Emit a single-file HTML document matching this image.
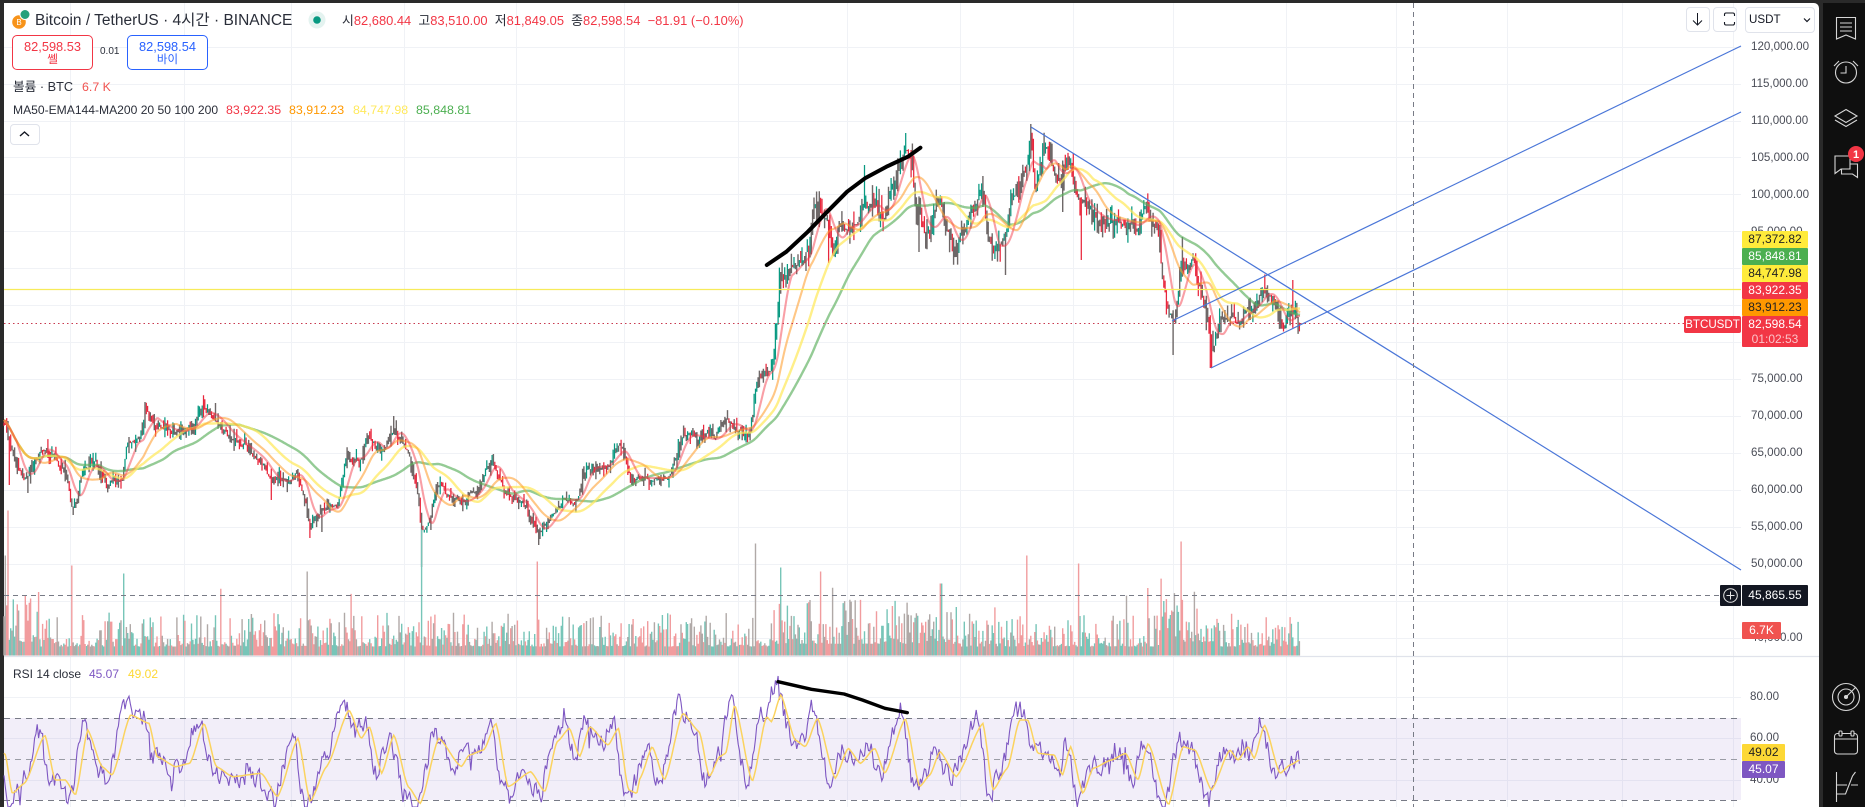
<!DOCTYPE html>
<html lang="ko"><head><meta charset="utf-8"><title>BTCUSDT</title>
<style>
html,body{margin:0;padding:0;width:1865px;height:807px;overflow:hidden;background:#2a2a2a;font-family:"Liberation Sans","Noto Sans CJK KR",sans-serif}
#c{position:absolute;left:4px;top:3px;width:1815px;height:804px;background:#fff;border-top-right-radius:5px}
#s{position:absolute;left:1823px;top:3px;width:42px;height:804px;background:#0f0f0f}
svg{position:absolute;left:0;top:0}
.t{position:absolute;white-space:nowrap;line-height:16px;height:16px}
.ax{position:absolute;left:1751px;font-size:11.6px;color:#4a4d57;line-height:14px;height:14px;white-space:nowrap}
.l{position:absolute;left:1742px;width:66px;height:17px;line-height:17px;text-align:center;font-size:12px;color:#fff;border-radius:1px;white-space:nowrap}
.r{color:#f23645}
.box{position:absolute;top:35px;width:79px;height:33px;border:1px solid #f23645;border-radius:5px;background:#fff;text-align:center;color:#f23645;box-sizing:content-box}
.box div{font-size:12.8px;line-height:13px}
.btn{position:absolute;top:7px;width:22px;height:23px;border:1px solid #e0e3eb;border-radius:4px;background:#fff}
</style></head><body>
<div id="c"></div><div id="s"></div>
<svg id="g" width="1865" height="807" viewBox="0 0 1865 807"></svg>

<div class="ax" style="top:40px">120,000.00</div>
<div class="ax" style="top:77px">115,000.00</div>
<div class="ax" style="top:114px">110,000.00</div>
<div class="ax" style="top:151px">105,000.00</div>
<div class="ax" style="top:188px">100,000.00</div>
<div class="ax" style="top:225px">95,000.00</div>
<div class="ax" style="top:372px">75,000.00</div>
<div class="ax" style="top:409px">70,000.00</div>
<div class="ax" style="top:446px">65,000.00</div>
<div class="ax" style="top:483px">60,000.00</div>
<div class="ax" style="top:520px">55,000.00</div>
<div class="ax" style="top:557px">50,000.00</div>
<div class="ax" style="top:631px">40,000.00</div>
<div class="ax" style="top:690px;left:1750px">80.00</div>
<div class="ax" style="top:731px;left:1750px">60.00</div>
<div class="ax" style="top:773px;left:1750px">40.00</div>

<div class="l" style="top:231px;background:#ffeb3b;color:#222">87,372.82</div>
<div class="l" style="top:248px;background:#4caf50">85,848.81</div>
<div class="l" style="top:265px;background:#ffeb3b;color:#222">84,747.98</div>
<div class="l" style="top:282px;background:#f23645">83,922.35</div>
<div class="l" style="top:299px;background:#ff9800;color:#222">83,912.23</div>
<div class="l" style="top:316px;background:#f23645;height:31px;line-height:15px;padding-top:1px;box-sizing:border-box">82,598.54<br><span style="color:#fbc4c9">01:02:53</span></div>
<div class="l" style="left:1684px;width:57px;top:316px;background:#f23645;font-size:11.6px;border-radius:2px">BTCUSDT</div>
<div class="l" style="top:585px;height:21px;line-height:21px;background:#131722">45,865.55</div>
<div class="l" style="left:1720px;width:21px;top:585px;height:21px;background:#131722"></div>
<div class="l" style="top:622px;width:39px;background:#f05350">6.7K</div>
<div class="l" style="top:744px;width:43px;background:#fdd835;color:#222">49.02</div>
<div class="l" style="top:761px;width:43px;background:#7e57c2">45.07</div>

<div class="t" style="left:35px;top:13px;font-size:15.5px;color:#2a2e39">Bitcoin / TetherUS · 4시간 · BINANCE</div>
<div class="t" style="left:342px;top:13px;font-size:12.9px;color:#2a2e39">시<span class="r">82,680.44</span>&nbsp; 고<span class="r">83,510.00</span>&nbsp; 저<span class="r">81,849.05</span>&nbsp; 종<span class="r">82,598.54</span>&nbsp; <span class="r">−81.91 (−0.10%)</span></div>

<div class="box" style="left:12px"><div style="margin-top:4px">82,598.53</div><div style="font-size:11.5px;margin-top:1px">쎌</div></div>
<div class="t" style="left:100px;top:44px;font-size:10px;color:#2a2e39">0.01</div>
<div class="box" style="left:127px;border-color:#2962ff;color:#2962ff"><div style="margin-top:4px">82,598.54</div><div style="font-size:11.5px;margin-top:1px">바이</div></div>

<div class="t" style="left:13px;top:79px;font-size:12.7px;color:#2a2e39">볼륨 · BTC</div>
<div class="t" style="left:82px;top:79px;font-size:12.4px;color:#f05350">6.7 K</div>
<div class="t" style="left:13px;top:102px;font-size:12.1px;color:#2a2e39">MA50-EMA144-MA200 20 50 100 200</div>
<div class="t" style="left:226px;top:102px;font-size:12.4px;color:#f23645">83,922.35</div>
<div class="t" style="left:289px;top:102px;font-size:12.4px;color:#ff9800">83,912.23</div>
<div class="t" style="left:353px;top:102px;font-size:12.4px;color:#ffe95c">84,747.98</div>
<div class="t" style="left:416px;top:102px;font-size:12.4px;color:#4caf50">85,848.81</div>
<div class="btn" style="left:10px;top:124px;width:28px;height:19px"></div>
<div class="t" style="left:13px;top:666px;font-size:12px;color:#2a2e39">RSI 14 close</div>
<div class="t" style="left:89px;top:666px;font-size:12px;color:#7e57c2">45.07</div>
<div class="t" style="left:128px;top:666px;font-size:12px;color:#fdd835">49.02</div>

<div class="btn" style="left:1686px"></div><div class="btn" style="left:1713px"></div>
<div class="btn" style="left:1745px;width:68px;height:24px"></div>
<div class="t" style="left:1749px;top:12px;font-size:11.6px;color:#131722">USDT</div>

<svg width="1865" height="807" viewBox="0 0 1865 807">
<!-- coin icon -->
<circle cx="19" cy="22" r="6.8" fill="#f7931a"/><text x="19" y="25" font-size="8" fill="#fff" text-anchor="middle" font-family="Liberation Sans">B</text>
<circle cx="25" cy="14.5" r="5" fill="#26a17b" stroke="#fff" stroke-width="1"/>
<!-- status dot -->
<circle cx="317" cy="20" r="8.5" fill="#e4f3f0"/><circle cx="317" cy="20" r="3.8" fill="#089981"/>
<!-- chevron -->
<path d="M20 136l4.5-4 4.5 4" fill="none" stroke="#131722" stroke-width="1.4"/>
<!-- top buttons -->
<path d="M1697.5 13v12M1693 20.5l4.5 4.5 4.5-4.5" fill="none" stroke="#131722" stroke-width="1"/>
<path d="M1720.5 15v-1.5a1.5 1.5 0 0 1 1.5-1.5h7a1.5 1.5 0 0 1 1.5 1.5v1.5M1720.5 21v1.5a1.5 1.5 0 0 0 1.5 1.5h7a1.5 1.5 0 0 0 1.5-1.5v-1.5" fill="none" stroke="#131722" stroke-width="1.1" transform="translate(4 1)"/>
<path d="M1804 18.5l3 3 3-3" fill="none" stroke="#131722" stroke-width="1.2"/>
<!-- plus button -->
<circle cx="1730.5" cy="595.5" r="6.8" fill="none" stroke="#e6e6e6" stroke-width="1"/><path d="M1730.5 591.5v8M1726.5 595.5h8" stroke="#e6e6e6" stroke-width="1"/>
<!-- sidebar icons -->
<g fill="none" stroke="#d6d6d6" stroke-width="1.1">
<path d="M1836.5 17.5h19v21.5l-9.5-4-9.5 4zM1840 23h12M1840 27h12M1840 31h12"/>
<circle cx="1846" cy="72.5" r="10.5"/><path d="M1846 66v7h-5.5M1834 66l5-5M1858 66l-5-5"/>
<path d="M1846 109.5l11 6.5-11 6.500-11-6.500zM1835 120l11 6.500 11-6.500"/>
<path d="M1835 156h15v13h-9l-6 4.500zM1850 164h7.500v13.500l-5-3.500h-11v-5"/>
<circle cx="1846" cy="697" r="13.500"/><circle cx="1846" cy="697" r="8"/><circle cx="1846" cy="697" r="1.500" fill="#d6d6d6"/><path d="M1846 697l10-10"/>
<rect x="1834.500" y="733.500" width="23" height="20.500" rx="3"/><path d="M1834.500 739h23"/><rect x="1839" y="731" width="3" height="5" rx="1" fill="#0f0f0f"/><rect x="1851" y="731" width="3" height="5" rx="1" fill="#0f0f0f"/>
<path d="M1836.500 772v30M1836.500 785h10.500M1836.500 794h9l7-18 3-4M1851 785h7"/>
</g>
<circle cx="1856" cy="154" r="8" fill="#f23645"/><text x="1856" y="158" font-size="11" font-weight="bold" fill="#fff" text-anchor="middle" font-family="Liberation Sans">1</text>
</svg>

<script>
(function(){
var NS='http://www.w3.org/2000/svg',g=document.getElementById('g');
function add(tag,a,par){var e=document.createElementNS(NS,tag);for(var k in a)e.setAttribute(k,a[k]);(par||g).appendChild(e);return e;}
function line(x1,y1,x2,y2,s,w,d,o){var a={x1:x1,y1:y1,x2:x2,y2:y2,stroke:s,'stroke-width':w||1};if(d)a['stroke-dasharray']=d;if(o)a.opacity=o;add('line',a);}
var seed=12345;function R(){seed|=0;seed=seed+0x6D2B79F5|0;var t=Math.imul(seed^seed>>>15,1|seed);t=t+Math.imul(t^t>>>7,61|t)^t;return((t^t>>>14)>>>0)/4294967296;}
function interp(P,x){if(x<=P[0][0])return P[0][1];for(var i=1;i<P.length;i++){if(x<=P[i][0]){var a=P[i-1],b=P[i],t=(x-a[0])/(b[0]-a[0]);t=t*t*(3-2*t)*.5+t*.5;return a[1]+(b[1]-a[1])*t;}}return P[P.length-1][1];}

// grid
var gc='#f0f2f6',i;
for(i=0;i<=16;i++){var y=Math.round(46.7+i*36.93)+.5;line(4,y,1741,y,gc);}
[697.5,738.5,780.5].forEach(function(y){line(4,y,1741,y,gc);});
[70,184,291,404,516,624,738,847,960,1073,1173,1286,1396,1507,1622,1733].forEach(function(x){line(x+.5,3,x+.5,807,gc);});

// RSI band
add('rect',{x:4,y:718,width:1737,height:82,fill:'#7e57c2','fill-opacity':.1});
[718.5,759.5,800.5].forEach(function(y,i){line(4,y,1741,y,i==1?'#9a9ca5':'#787b86',1,'6 5');});
line(4,656.5,1819,656.5,'#e0e3eb',1.2);

// price center line
var P=[[4,420],[18,467],[24,480],[43,445],[53,458],[65,470],[73,510],[84,467],[96,465],[106,483],[122,477],[127,445],[143,437],[145,412],[155,422],[175,432],[192,427],[202,410],[216,418],[227,433],[245,447],[261,460],[271,478],[286,483],[296,468],[306,503],[310,523],[322,510],[337,507],[347,457],[359,460],[369,437],[382,453],[394,427],[408,453],[416,483],[422,533],[429,523],[437,483],[449,497],[461,503],[475,493],[492,460],[504,490],[522,503],[539,533],[551,517],[565,497],[575,503],[586,468],[608,465],[616,448],[622,450],[631,477],[640,478],[666,478],[684,434],[713,440],[728,422],[749,434],[758,378],[772,367],[777.5,320],[779,277],[786,277],[797,263],[808,253],[815,205],[826,212],[833,250],[840,229],[854,225],[865,207],[877,204],[883,220],[892,189],[906,146],[911,159],[917,213],[929,233],[940,210],[956,247],[972,208],[983,182],[988,237],[993.5,250],[1006,240],[1015,193],[1026,165],[1031,139],[1035,187],[1044,155],[1054,165],[1058,183],[1069,160],[1079,193],[1088,210],[1104,220],[1119,220],[1136,227],[1145,212],[1158,227],[1163,280],[1169,310],[1174,317],[1183,263],[1194,265],[1201,297],[1208,320],[1213,350],[1220,323],[1240,320],[1245,307],[1251,312],[1261,292],[1272,296],[1283,327],[1294,309],[1299,323],[1300,322]];
var low=[[422,567],[9,485],[28,493],[73,515],[271,500],[310,538],[322,532],[539,545],[1006,275],[1081,260],[1173,355],[1211,368],[828,263],[919,252],[956,257],[1063,212]];
var high=[[145,402],[394,416],[492,455],[1031,124],[906,133],[864,165],[983,176],[1182,237],[1293,280],[215,403]];
var ST=1.33,gp='',tp='',rp='',n=0,prev=null;
function near(L,x){for(var j=0;j<L.length;j++)if(Math.abs(L[j][0]-x)<.7)return L[j][1];return null;}
for(var x=4;x<=1300;x+=ST){
  var c=interp(P,x),amp=2.8+5.5*(600-c)/420;
  n=n*.7+(R()-.5)*amp*1.2;
  var cl=c+n,op=prev===null?cl:prev;prev=cl;
  var t=Math.min(op,cl),b=Math.max(op,cl);if(b-t<1)b=t+1;
  var hi=t-Math.pow(R(),2.5)*amp*2.2,lo=b+Math.pow(R(),2.5)*amp*2.2;
  var s1=near(low,x),s2=near(high,x);if(s1)lo=s1;if(s2)hi=s2;
  var seg='M'+x.toFixed(1)+' '+hi.toFixed(1)+'V'+lo.toFixed(1);
  var r=R();if(r<.5)gp+=seg;else if(cl<op)tp+=seg;else rp+=seg;
}
add('path',{d:tp,stroke:'#089981','stroke-width':1.25,fill:'none'});
add('path',{d:rp,stroke:'#e8263c','stroke-width':1.25,fill:'none'});
add('path',{d:gp,stroke:'#6e6868','stroke-width':1.4,fill:'none'});

// moving averages
var raw=[];for(x=0;x<=1300;x++)raw[x]=interp(P,Math.max(x,4));
function ma(W,col,w,o){var d='',s=0,cnt=0;for(x=4;x<=1300;x++){var a=Math.max(4,x-W),sum=0;for(var k=a;k<=x;k++)sum+=raw[k];var v=sum/(x-a+1);d+=(x==4?'M':'L')+x+' '+v.toFixed(1);}
add('path',{d:d,stroke:col,'stroke-width':w,fill:'none',opacity:o});}
ma(95,'#5aaf5c',2.4,.65);
ma(60,'#ffe95c',2.4,.72);
ma(32,'#ff9f2e',2.1,.58);
ma(13,'#f23645',2.1,.48);

// horizontal lines
line(4,289.5,1741,289.5,'#f7eb5a',1.3);
line(4,323.5,1684,323.5,'#c8394f',1,'1.5 3');

// blue tool lines
var blue='#4a76d8';
line(1031,127,1741,570,blue,1.2);line(1172,321,1741,46,blue,1.2);line(1211,368,1741,112,blue,1.2);

// volume
var vt='',vr='',vg='';
for(x=4;x<=1300;x+=ST){
  var act=1+(x>770&&x<960?.3:0)+(x>1160&&x<1215?.5:0)+(x<40?.5:0),rr=R();
  var h=(9+Math.pow(R(),2.3)*34)*act;
  if(rr<.02)h=25+R()*45*act;
  if(Math.abs(x-8)<.7)h=145;if(Math.abs(x-5)<.7)h=100;if(Math.abs(x-421)<.7)h=126;if(Math.abs(x-756)<.7)h=112;if(Math.abs(x-1181)<.7)h=114;
  if(Math.abs(x-537)<.7)h=94;if(Math.abs(x-72)<.7)h=90;if(Math.abs(x-124)<.7)h=82;if(Math.abs(x-307)<.7)h=84;if(Math.abs(x-1027)<.7)h=100;if(Math.abs(x-1079)<.7)h=92;if(Math.abs(x-820)<.7)h=84;if(Math.abs(x-781)<.7)h=88;if(Math.abs(x-941)<.7)h=72;
  var sg='M'+x.toFixed(1)+' 655.5V'+(655.5-h).toFixed(1),q=R();
  if(q<.36)vt+=sg;else if(q<.72)vr+=sg;else vg+=sg;
}
add('path',{d:vt,stroke:'#77c5b8','stroke-width':1.4,fill:'none'});
add('path',{d:vr,stroke:'#f19c9e','stroke-width':1.4,fill:'none'});
add('path',{d:vg,stroke:'#b0a9a7','stroke-width':1.4,fill:'none'});
line(4,595.5,1720,595.5,'#787b86',1,'5 4');
line(1413.5,3,1413.5,807,'#787b86',1,'5 4');

// RSI
var Z1=[[12,310],[30,430],[60,400],[110,255],[135,390],[160,390],[185,435],[215,240],[250,350],[275,375],[320,195],[365,220],[385,320],[430,350],[465,340],[500,220],[530,350],[570,380],[640,370],[680,440],[730,265],[760,455],[800,350],[855,180],[885,265],[905,230],[935,370],[965,255],[1000,410],[1030,460],[1075,265],[1130,350],[1150,315],[1185,300],[1215,220],[1245,410],[1300,365],[1335,425],[1365,275],[1395,235],[1420,320],[1445,230],[1490,285],[1515,235],[1540,420],[1560,430]];
var Z2=[[0,385],[30,290],[60,390],[105,190],[145,245],[170,380],[195,320],[210,310],[232,165],[275,395],[310,200],[322,215],[345,135],[380,270],[405,290],[435,205],[478,385],[510,295],[540,340],[575,295],[600,370],[650,205],[685,410],[710,375],[735,305],[775,380],[840,220],[865,420],[900,355],[930,210],[950,210],[975,310],[1015,315],[1035,375],[1055,290],[1085,430],[1110,355],[1155,330],[1190,310],[1220,390],[1245,280],[1295,465],[1330,290],[1360,300],[1400,420],[1445,300],[1465,330],[1490,290],[1505,325],[1530,225],[1568,370]];
var Y=[];Z1.forEach(function(p){Y.push([p[0]/2.45,650+p[1]/3]);});Z2.forEach(function(p){Y.push([640+p[0]/2.45,650+p[1]/3]);});
Y.push([1290,765],[1300,760]);
var pd='',yd='';n=0;
for(x=4;x<=1300;x+=ST){
  var v=interp(Y,x+5);n=n*.35+(R()-.5)*19;
  if(R()<.05)n+=(R()-.5)*34;
  var pv=759+(v-759)*1.22+n;
  if(Math.abs(x-778)<1)pv=676;
  pd+=(pd?'L':'M')+x.toFixed(1)+' '+Math.min(807,pv).toFixed(1);
  yd+=(yd?'L':'M')+x.toFixed(1)+' '+interp(Y,x).toFixed(1);
}
add('path',{d:pd,stroke:'#7e57c2','stroke-width':1.1,fill:'none'});
add('path',{d:yd,stroke:'#fbd35f','stroke-width':1.5,fill:'none'});

// hand-drawn black lines
function conv(A,ox,oy,sx){return A.map(function(p,i){return (i?'L':'M')+(ox+p[0]/sx).toFixed(1)+' '+(oy+p[1]/3).toFixed(1);}).join('');}
var st={stroke:'#000','stroke-width':4,fill:'none','stroke-linecap':'round','stroke-linejoin':'round'};
st.d=conv([[75,435],[130,395],[190,335],[240,280],[300,215],[350,175],[410,140],[470,110],[505,83]],740,120,2.8);add('path',st);
st.d=conv([[338,95],[420,118],[500,132],[545,150],[600,175],[655,188]],640,650,2.45);st['stroke-width']=3.4;add('path',st);
})();
</script>
</body></html>
